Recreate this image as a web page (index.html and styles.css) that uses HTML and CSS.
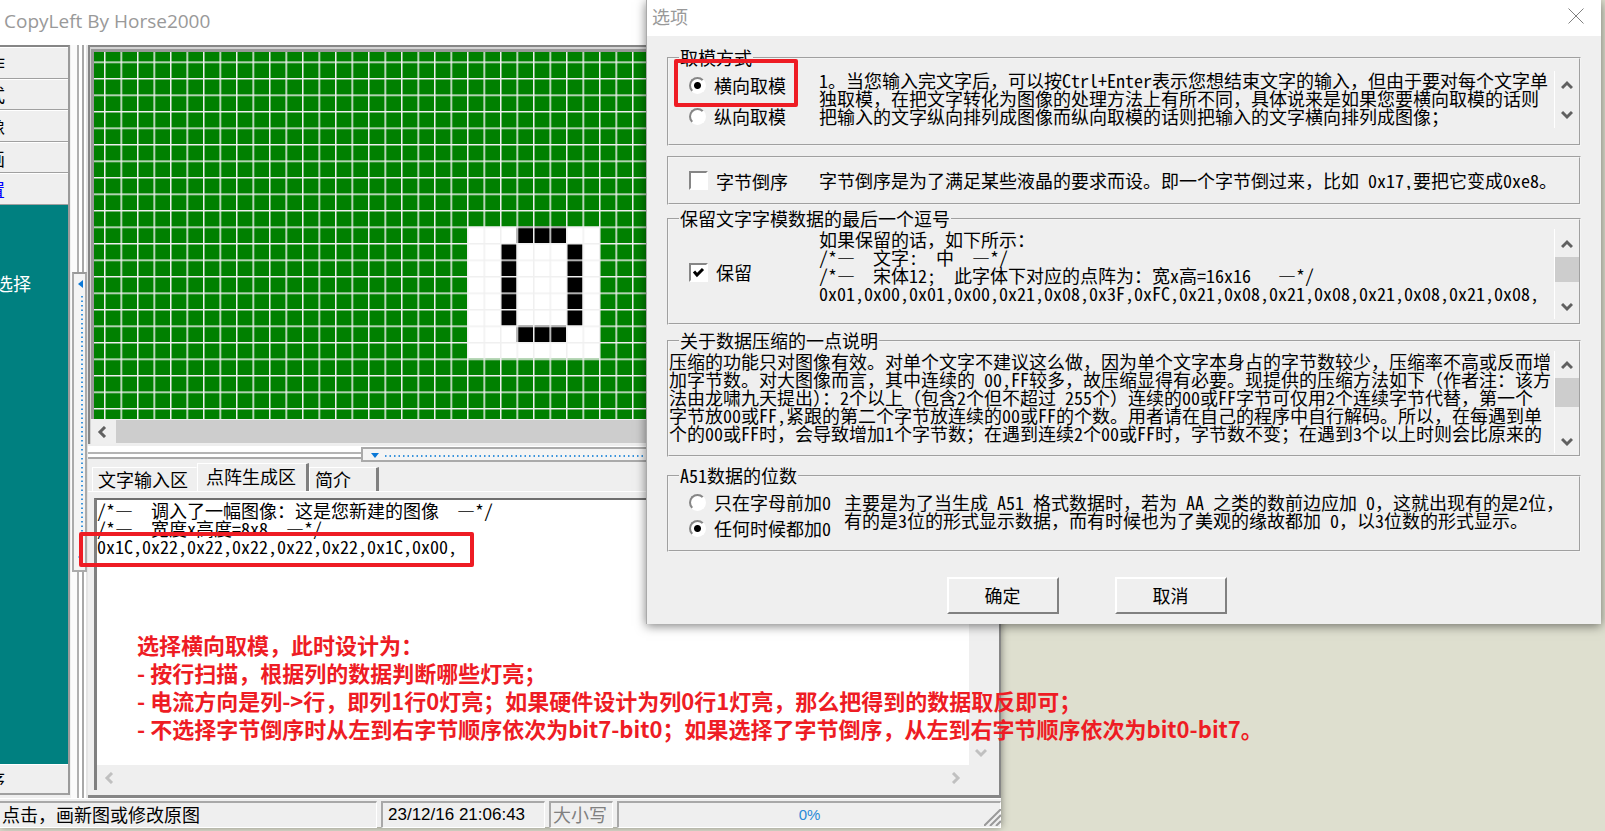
FILE: index.html
```html
<!DOCTYPE html>
<html lang="zh-CN">
<head>
<meta charset="utf-8">
<title>CopyLeft By Horse2000</title>
<link rel="stylesheet" href="styles.css">
</head>
<body>
<svg class="defs" aria-hidden="true">
  <symbol id="up" viewBox="0 0 12 10"><path d="M1 8L6 3L11 8" fill="none" stroke="currentColor" stroke-width="3"/></symbol>
  <symbol id="down" viewBox="0 0 12 10"><path d="M1 2L6 7L11 2" fill="none" stroke="currentColor" stroke-width="3"/></symbol>
  <symbol id="left" viewBox="0 0 10 12"><path d="M8 1L3 6L8 11" fill="none" stroke="currentColor" stroke-width="3"/></symbol>
  <symbol id="right" viewBox="0 0 10 12"><path d="M2 1L7 6L2 11" fill="none" stroke="currentColor" stroke-width="3"/></symbol>
</svg>
<main class="desktop">
  <section class="window app">
    <header class="app-title">CopyLeft By Horse2000</header>
    <div class="workspace">
      <nav class="sidebar">
        <div class="side-list">
          <button class="side-btn" type="button">作</button>
          <button class="side-btn" type="button">式</button>
          <button class="side-btn" type="button">像</button>
          <button class="side-btn" type="button">画</button>
          <button class="side-btn active" type="button">置</button>
        </div>
        <div class="side-page">选择</div>
        <button class="side-btn last" type="button">序</button>
      </nav>
      <div class="vsplit">
        <div class="vhandle">
          <svg width="12" height="296" aria-hidden="true">
            <path d="M9 6V14L4 10Z" fill="#0a78d7"/>
            <path d="M8 22V270" stroke="#3a94dc" stroke-width="2" stroke-dasharray="1.5 3"/>
            <path d="M9 279V287L4 283Z" fill="#0a78d7"/>
          </svg>
        </div>
      </div>
      <div class="content">
        <div class="canvas-panel">
          <svg class="pixels" aria-label="点阵图像">
            <defs>
              <pattern id="grid" x="10" y="9.5" width="16.5" height="16.5" patternUnits="userSpaceOnUse">
                <path d="M0 .75H16.5M.75 0V16.5" stroke="#f0f0f0" stroke-width="1.5"/>
              </pattern>
            </defs>
            <rect width="100%" height="100%" fill="#008000"/>
            <rect x="373" y="174.5" width="132" height="132" fill="#fff"/>
            <path fill="#000" d="M422.500 174.500h49.500v16.500h-49.500zM406 191h16.500v82.500h-16.500zM472 191h16.500v82.500h-16.500zM422.500 273.500h49.500v16.500h-49.500z"/>
            <rect width="100%" height="100%" fill="url(#grid)"/>
          </svg>
          <div class="hscroll canvas-scroll">
            <svg class="arrow-h"><use href="#left"/></svg>
            <span class="hthumb"></span>
          </div>
        </div>
        <div class="hsplit">
          <div class="hhandle">
            <svg width="100%" height="11" aria-hidden="true">
              <path d="M8 4H16L12 9Z" fill="#0a78d7"/>
              <line x1="22" y1="7" x2="100%" y2="7" stroke="#3a94dc" stroke-width="2" stroke-dasharray="1.5 3"/>
            </svg>
          </div>
        </div>
        <div class="tabs" role="tablist">
          <button class="tab wide" type="button" role="tab">文字输入区</button>
          <button class="tab wide selected" type="button" role="tab" aria-selected="true">点阵生成区</button>
          <button class="tab" type="button" role="tab">简介</button>
        </div>
        <div class="tab-page">
          <div class="editor">
            <textarea class="output" aria-label="点阵数据" spellcheck="false" wrap="off">/*—  调入了一幅图像：这是您新建的图像  —*/
/*—  宽度x高度=8x8  —*/
0x1C,0x22,0x22,0x22,0x22,0x22,0x1C,0x00,</textarea>
            <div class="vscroll muted editor-v"><svg class="arrow-v"><use href="#up"/></svg><svg class="arrow-v"><use href="#down"/></svg></div>
            <div class="hscroll muted"><svg class="arrow-h"><use href="#left"/></svg><svg class="arrow-h"><use href="#right"/></svg></div>
            <div class="corner"></div>
          </div>
        </div>
      </div>
    </div>
    <footer class="status">
      <div class="cell hint">点击，画新图或修改原图</div>
      <div class="cell clock">23/12/16 21:06:43</div>
      <div class="cell caps">大小写</div>
      <div class="cell progress">0%</div>
      <svg class="grip" width="17" height="17" aria-hidden="true"><path d="M0 17L17 0M6 17L17 6M12 17L17 12" stroke="#999" stroke-width="2"/></svg>
    </footer>
  </section>

  <form class="window dialog" role="dialog" aria-label="选项">
    <header class="dialog-title">
      <span>选项</span>
      <button class="close" type="button" aria-label="关闭"><svg width="16" height="16"><path d="M.5 .5L15.500 15.500M15.500 .5L.5 15.500" stroke="#808080" fill="none"/></svg></button>
    </header>
    <div class="dialog-body">
      <fieldset class="group mode">
        <legend>取模方式</legend>
        <div class="row">
          <div class="choices">
            <label><input type="radio" name="mode" checked>横向取模</label>
            <label><input type="radio" name="mode">纵向取模</label>
          </div>
          <p class="memo">1。当您输入完文字后，可以按Ctrl+Enter表示您想结束文字的输入，但由于要对每个文字单
独取模，在把文字转化为图像的处理方法上有所不同，具体说来是如果您要横向取模的话则
把输入的文字纵向排列成图像而纵向取模的话则把输入的文字横向排列成图像；</p>
          <div class="vscroll"><svg class="arrow-v"><use href="#up"/></svg><svg class="arrow-v"><use href="#down"/></svg></div>
        </div>
      </fieldset>

      <fieldset class="group reverse">
        <div class="row">
          <div class="choices"><label><input type="checkbox">字节倒序</label></div>
          <p class="memo">字节倒序是为了满足某些液晶的要求而设。即一个字节倒过来，比如 0x17,要把它变成0xe8。</p>
        </div>
      </fieldset>

      <fieldset class="group comma">
        <legend>保留文字字模数据的最后一个逗号</legend>
        <div class="row">
          <div class="choices"><label><input type="checkbox" checked>保留</label></div>
          <p class="memo">如果保留的话，如下所示：
/*—  文字:  中  —*/
/*—  宋体12;  此字体下对应的点阵为：宽x高=16x16   —*/
0x01,0x00,0x01,0x00,0x21,0x08,0x3F,0xFC,0x21,0x08,0x21,0x08,0x21,0x08,0x21,0x08,</p>
          <div class="vscroll"><svg class="arrow-v"><use href="#up"/></svg><span class="vthumb"></span><svg class="arrow-v"><use href="#down"/></svg></div>
        </div>
      </fieldset>

      <fieldset class="group compress">
        <legend>关于数据压缩的一点说明</legend>
        <div class="row">
          <p class="memo">压缩的功能只对图像有效。对单个文字不建议这么做，因为单个文字本身占的字节数较少，压缩率不高或反而增
加字节数。对大图像而言，其中连续的 00,FF较多，故压缩显得有必要。现提供的压缩方法如下（作者注：该方
法由龙啸九天提出）：2个以上（包含2个但不超过 255个）连续的00或FF字节可仅用2个连续字节代替，第一个
字节放00或FF,紧跟的第二个字节放连续的00或FF的个数。用者请在自己的程序中自行解码。所以，在每遇到单
个的00或FF时，会导致增加1个字节数；在遇到连续2个00或FF时，字节数不变；在遇到3个以上时则会比原来的</p>
          <div class="vscroll"><svg class="arrow-v"><use href="#up"/></svg><span class="vthumb"></span><svg class="arrow-v"><use href="#down"/></svg></div>
        </div>
      </fieldset>

      <fieldset class="group a51">
        <legend>A51数据的位数</legend>
        <div class="row">
          <div class="choices">
            <label><input type="radio" name="bits">只在字母前加0</label>
            <label><input type="radio" name="bits" checked>任何时候都加0</label>
          </div>
          <p class="memo">主要是为了当生成 A51 格式数据时，若为 AA 之类的数前边应加 0，这就出现有的是2位，
有的是3位的形式显示数据，而有时候也为了美观的缘故都加 0，以3位数的形式显示。</p>
        </div>
      </fieldset>

      <div class="actions">
        <button class="push" type="button">确定</button>
        <button class="push" type="button">取消</button>
      </div>
    </div>
  </form>

  <div class="mark mark-mode"></div>
  <div class="mark mark-data"></div>
  <p class="note">选择横向取模，此时设计为：
- 按行扫描，根据列的数据判断哪些灯亮；
- 电流方向是列-&gt;行，即列1行0灯亮；如果硬件设计为列0行1灯亮，那么把得到的数据取反即可；
- 不选择字节倒序时从左到右字节顺序依次为bit7-bit0；如果选择了字节倒序，从左到右字节顺序依次为bit0-bit7。</p>
</main>
</body>
</html>
```
FILE: styles.css
```css
* { box-sizing: border-box; }
body {
  margin: 0;
  background: #dedfcf;
  color: #000;
  font: 18px/18px "Noto Sans Mono CJK SC", "Noto Sans CJK SC", sans-serif;
}
button, textarea, input { font: inherit; color: inherit; margin: 0; }
button { padding: 0; border: 0; background: none; white-space: nowrap; }
p { margin: 0; }
.defs { position: absolute; width: 0; height: 0; }
.desktop { position: relative; height: 100vh; min-height: 760px; overflow: hidden; }
.window { position: absolute; background: #efefef; }

/* main application window */
.app {
  inset: 0 604px 4px 0;
  display: flex;
  flex-direction: column;
  box-shadow: 0 0 8px rgba(0, 0, 0, .45);
}
.app-title {
  height: 45px;
  padding: 0 4px;
  background: #fff;
  color: #999;
  font: 19px/42px "Open Sans", sans-serif;
}
.workspace {
  flex: 1;
  min-height: 0;
  display: grid;
  grid-template-columns: 70px 18px minmax(0, 1fr);
}
.sidebar {
  display: flex;
  flex-direction: column;
  margin-bottom: 3px;
  border-top: 2px solid #868686;
  border-right: 2px solid #9a9a9a;
  overflow: hidden;
}
.side-list { flex: none; height: 158px; display: grid; grid-template-rows: repeat(5, 1fr); }
.side-btn {
  border-top: 1px solid #fff;
  border-bottom: 1px solid #a0a0a0;
  background: #efefef;
  text-align: left;
  text-indent: -13px;
}
.side-btn.active { color: #00f; }
.side-btn.last { flex: none; height: 31px; border-bottom-width: 2px; }
.side-page {
  flex: 1;
  padding-top: 69px;
  background: #008080;
  color: #fff;
  text-indent: -5px;
}
.vsplit {
  padding: 227px 1px 0 2px;
  background: linear-gradient(90deg, #efefef 0 1px, #fbfbfb 1px 7px, #b0b0b0 7px 9px, #fff 9px 12px, #a8a8a8 12px 14px, #fff 14px 16px, #e4e4e4 16px);
}
.vhandle {
  height: 300px;
  border: 2px solid #aaa;
  border-top-color: #999;
  background: #f4f4f4;
  overflow: hidden;
}
.vhandle svg { display: block; }
.content {
  display: flex;
  flex-direction: column;
  min-width: 0;
  border-right: 2px solid #868686;
  border-bottom: 3px solid #868686;
}
.canvas-panel {
  border-top: 2px solid #868686;
  border-left: 2px solid #868686;
  padding: 2px 0 0 1px;
  background: #d4d4d4;
}
.pixels {
  display: block;
  width: 100%;
  height: 370px;
  border-top: 3px solid #989898;
  border-left: 3px solid #989898;
}
.hscroll {
  height: 25px;
  display: flex;
  align-items: center;
  justify-content: space-between;
  padding: 0 7px;
  background: #efefef;
  color: #606060;
}
.canvas-scroll { padding: 1px 0 1px 6px; gap: 9px; }
.hthumb { flex: 1; align-self: stretch; background: #cdcdcd; }
.arrow-h { width: 10px; height: 12px; }
.arrow-v { width: 12px; height: 10px; flex: none; }
.hsplit {
  flex: none;
  height: 19px;
  padding: 3px 0 0 273px;
  background: linear-gradient(#eee 0 2px, #fff 2px 8px, #b4b4b4 8px 10px, #fff 10px 13px, #a8a8a8 13px 15px, #efefef 15px);
}
.hhandle { height: 15px; border: 2px solid #aaa; background: #f4f4f4; overflow: hidden; }
.hhandle svg { display: block; }
.tabs { flex: none; display: flex; align-items: flex-end; height: 28px; padding-left: 4px; }
.tab {
  width: 70px;
  height: 24px;
  padding: 0 5px 2px;
  border-top: 1px solid #fff;
  border-left: 1px solid #fff;
  border-right: 3px solid #808080;
  text-align: left;
}
.tab.wide { width: 105px; border-right: 1px solid #efefef; }
.tab.wide.selected { width: 112px; height: 28px; padding: 0 8px 4px; border-right: 3px solid #808080; }
.tab-page {
  flex: 1;
  min-height: 0;
  padding: 6px 6px 5px;
  border-top: 1px solid #fff;
  display: flex;
}
.editor {
  flex: 1;
  display: grid;
  grid-template-columns: minmax(0, 1fr) 25px;
  grid-template-rows: minmax(0, 1fr) 25px;
  border-top: 2px solid #707070;
  border-left: 3px solid #808080;
}
.output {
  width: 100%;
  height: 100%;
  padding: 1px 0;
  border: 0;
  outline: 0;
  resize: none;
  overflow: hidden;
  background: #fff;
}
.corner { background: #efefef; }
.vscroll {
  display: flex;
  flex-direction: column;
  align-items: center;
  justify-content: space-between;
  border-left: 1px solid #fff;
  background: #efefef;
  color: #606060;
}
.vthumb { align-self: stretch; background: #cdcdcd; }
.muted { color: #c0c0c0; }
.editor-v { padding: 7px 0; }
.status {
  position: relative;
  flex: none;
  height: 29px;
  padding: 2px 0 1px;
  display: grid;
  grid-template-columns: 377px 164px 64px minmax(0, 1fr);
  gap: 4px;
  border-top: 1px solid #fff;
}
.cell {
  padding: 2px;
  border: 1px solid #fff;
  border-top: 2px solid #a8a8a8;
  border-left: 2px solid #a8a8a8;
  white-space: nowrap;
}
.hint { border-left: 0; }
.clock { padding: 3px 5px; font-family: "Liberation Sans", sans-serif; font-size: 17px; }
.caps { color: #808080; }
.progress { padding: 3px; color: #2a8ad8; text-align: center; font-family: "Liberation Sans", sans-serif; font-size: 15px; }
.grip { position: absolute; right: 0; bottom: 1px; }

/* options dialog */
.dialog {
  left: 646px;
  right: 4px;
  top: 0;
  border-left: 1px solid #aaa;
  box-shadow: 0 2px 10px rgba(0, 0, 0, .5);
}
.dialog-title {
  height: 36px;
  padding: 0 17px 4px 5px;
  display: flex;
  align-items: center;
  justify-content: space-between;
  background: #fff;
  color: #999;
  font-family: "Noto Sans CJK SC", sans-serif;
}
.close svg { display: block; }
.dialog-body { padding: 12px 20px 10px; }
.group {
  min-width: 0;
  margin: 0;
  padding: 0;
  border: 2px groove #f4f4f4;
}
.group legend { height: 20px; line-height: 19px; margin-left: 10px; padding: 0 1px; }
.row { display: flex; }
.memo { flex: 1; min-width: 0; white-space: pre; overflow: hidden; }
.choices { flex: none; width: 150px; padding-left: 20px; display: flex; flex-direction: column; justify-content: center; }
.choices label { display: flex; align-items: center; gap: 8px; }
.row > .vscroll { flex: none; width: 25px; }
.mode { height: 98px; }
.mode .row { padding-top: 3px; height: 60px; }
.mode .choices { gap: 13px; padding-top: 2px; }
.mode .vscroll { padding: 9px 0 8px; }
.reverse { height: 49px; margin-top: 10px; padding-top: 13px; }
.comma { height: 116px; margin-top: 4px; }
.comma .row { height: 90px; }
.comma .choices { padding-bottom: 4px; }
.comma .memo { padding: 1px 0; }
.comma .vscroll { padding: 10px 0 7px; }
.comma .vthumb { height: 25px; margin-bottom: 12px; }
.compress { height: 126px; margin-top: 6px; }
.compress .row { height: 102px; }
.compress .memo { padding: 1px 0; }
.compress .vscroll { padding: 9px 0 6px; }
.compress .vthumb { height: 29px; margin-bottom: 23px; }
.a51 { height: 86px; margin-top: 9px; }
.a51 .row { padding-top: 7px; }
.a51 .choices { width: 175px; gap: 8px; }
input[type="radio"], input[type="checkbox"] {
  appearance: none;
  flex: none;
  width: 17px;
  height: 17px;
  border: 2px solid;
  border-color: #868686 #fff #fff #868686;
  background: #fff;
}
input[type="radio"] { border-radius: 50%; }
input[type="radio"]:checked { background: radial-gradient(circle, #000 0 3px, #fff 4px); }
input[type="checkbox"] { width: 19px; height: 19px; }
input[type="checkbox"]:checked {
  background: #fff url("data:image/svg+xml,%3Csvg xmlns='http://www.w3.org/2000/svg' viewBox='0 0 15 15'%3E%3Cpath d='M3 6.500L6 10L12 4' fill='none' stroke='%23000' stroke-width='3'/%3E%3C/svg%3E");
}
.actions { display: flex; justify-content: center; gap: 56px; margin-top: 25px; padding-right: 75px; }
.push {
  width: 112px;
  height: 37px;
  padding-bottom: 2px;
  border: 2px solid;
  border-color: #fff #808080 #808080 #fff;
  background: #efefef;
}

/* annotations */
.mark { position: absolute; border: 4px solid #ee1c24; border-radius: 2px; }
.mark-mode { left: 674px; top: 59px; width: 124px; height: 48px; }
.mark-data { left: 79px; top: 532px; width: 395px; height: 35px; }
.note {
  position: absolute;
  left: 137px;
  top: 630px;
  color: #ee1c24;
  font: bold 22px/28px "Noto Sans CJK SC", sans-serif;
  white-space: pre;
}
```
